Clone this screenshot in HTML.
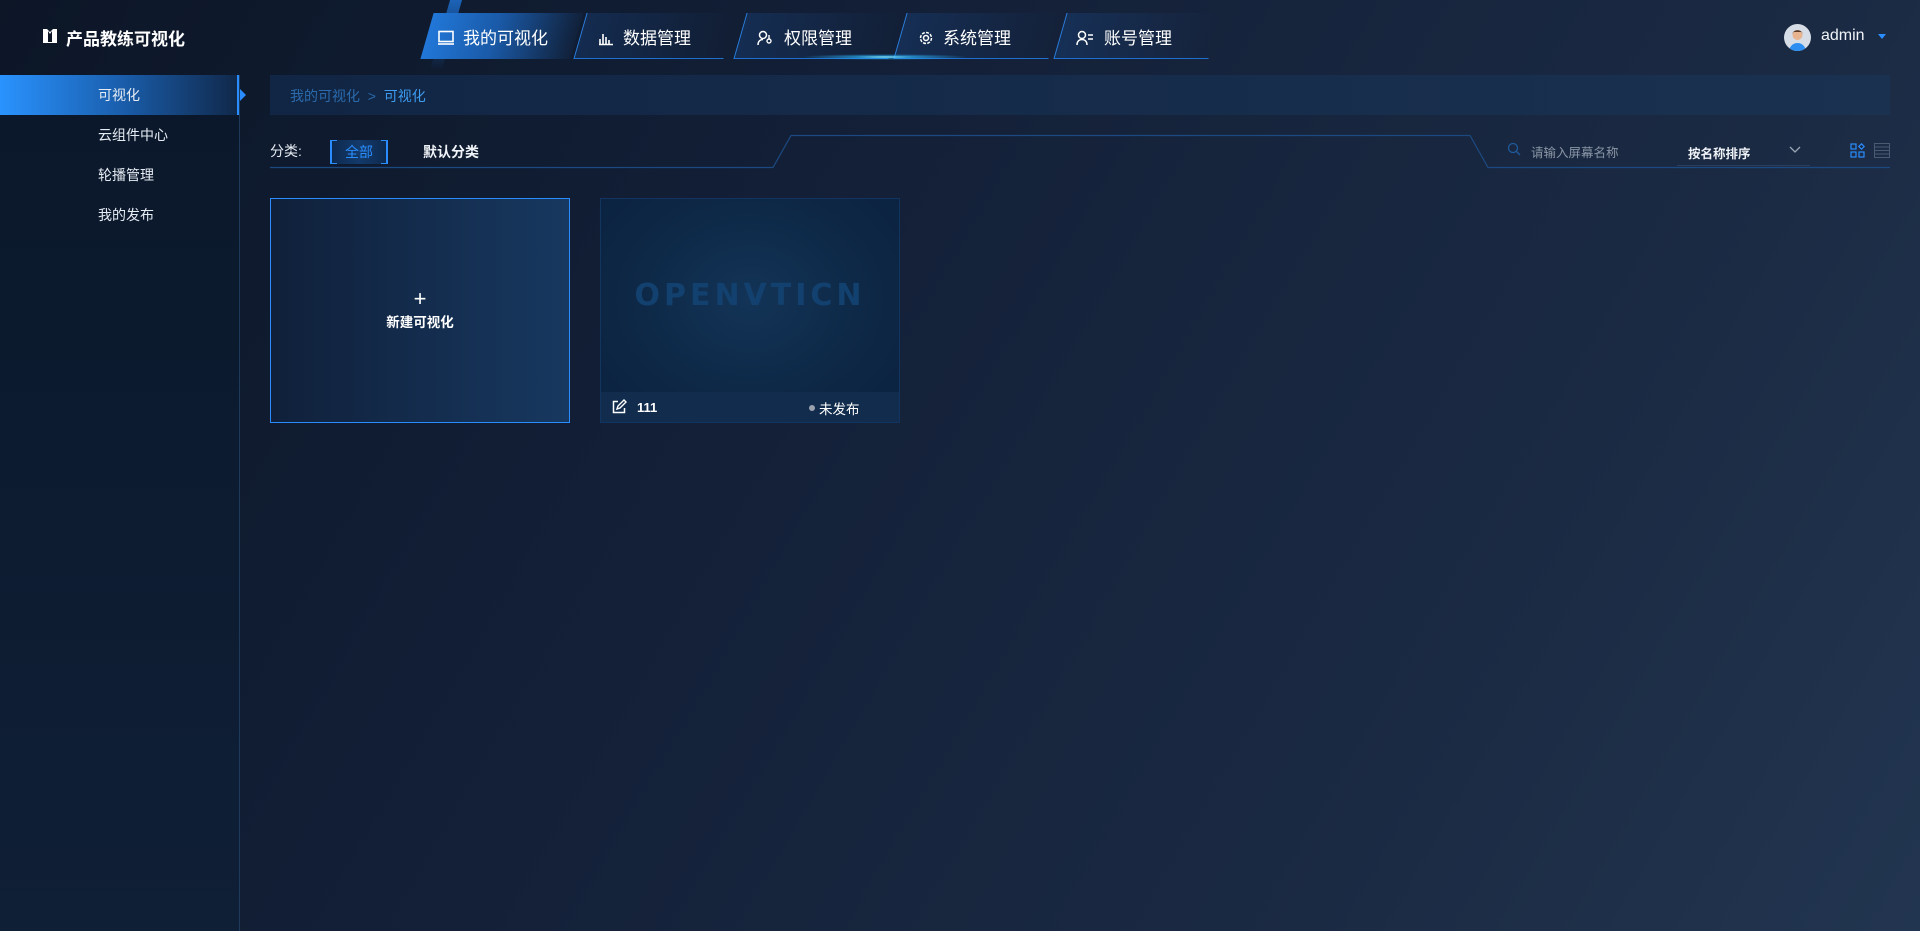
<!DOCTYPE html>
<html><head><meta charset="utf-8">
<style>
*{margin:0;padding:0;box-sizing:border-box}
body{width:1920px;height:931px;overflow:hidden;font-family:"Liberation Sans","Noto Sans CJK SC",sans-serif;color:#fff;
background:linear-gradient(120deg,#0c1627 0%,#132038 40%,#1b2a43 75%,#223550 100%);position:relative}
.abs{position:absolute}
.side{left:0;top:75px;width:240px;height:856px;background:linear-gradient(180deg,#0b182b,#0f1f36);border-right:1px solid #1d3a5c}
.item{position:absolute;left:0;width:239px;height:40px;line-height:40px;padding-left:98px;font-size:14px;color:#e6ecf3}
.item.act{background:linear-gradient(90deg,#2a93ff 0%,#1a5fae 50%,#10284a 100%);border-right:2px solid #2a8dff}
.tab{position:absolute;top:13px;height:46px;transform:skewX(-16deg);border:none;border-left:1px solid #2a7fe0;border-bottom:1px solid #1e6fd0;
background:linear-gradient(90deg,rgba(30,90,170,.25),rgba(20,40,70,0))}
.tab.act{background:linear-gradient(90deg,#2177d8 0%,#1a5aa8 45%,rgba(20,50,90,.2) 100%);border:none}
.tt{position:absolute;top:29px;font-size:17px;color:#fff;line-height:20px}
.ic{position:absolute;top:30px}
</style></head><body>
<div class="abs" style="left:40px;top:26px;width:20px;height:20px">
<svg width="20" height="20" viewBox="0 0 20 20"><path d="M3 3h4l3 3 3-3h4v14H3z" fill="#fff"/><path d="M8 5l2 3 2-3v11H8z" fill="#0c1627"/></svg></div>
<div class="abs" style="left:66px;top:25px;font-size:17px;font-weight:bold">产品教练可视化</div>

<div class="abs" style="left:440px;top:0;width:12px;height:70px;background:linear-gradient(180deg,#1c63b8,rgba(28,99,184,0));transform:skewX(-16deg)"></div>
<div class="tab act" style="left:427px;width:150px"></div>
<div class="tab" style="left:580px;width:150px"></div>
<div class="tab" style="left:740px;width:155px"></div>
<div class="tab" style="left:900px;width:155px"></div>
<div class="tab" style="left:1060px;width:155px"></div>
<div class="abs" style="left:800px;top:54px;width:170px;height:6px;background:radial-gradient(ellipse at center,rgba(150,240,255,1) 0%,rgba(40,170,240,.7) 25%,rgba(20,80,160,0) 70%)"></div>

<svg class="ic" style="left:437px" width="18" height="16" viewBox="0 0 18 16"><rect x="2" y="1.5" width="14" height="10" fill="none" stroke="#fff" stroke-width="1.6"/><path d="M1 14h16" stroke="#fff" stroke-width="1.6"/></svg>
<div class="tt" style="left:463px">我的可视化</div>
<svg class="ic" style="left:598px" width="16" height="16" viewBox="0 0 16 16"><path d="M2 14V9M5 14V4M8 14V7M11 14V10M1 14.5h14" stroke="#fff" stroke-width="1.6" fill="none"/></svg>
<div class="tt" style="left:623px">数据管理</div>
<svg class="ic" style="left:757px" width="18" height="16" viewBox="0 0 18 16"><circle cx="6" cy="5" r="3.5" fill="none" stroke="#fff" stroke-width="1.5"/><path d="M1 15c0-4 2.5-5.5 5-5.5" fill="none" stroke="#fff" stroke-width="1.5"/><circle cx="12" cy="11" r="2" fill="none" stroke="#fff" stroke-width="1.4"/><path d="M12 5v4" stroke="#fff" stroke-width="1.4"/></svg>
<div class="tt" style="left:784px">权限管理</div>
<svg class="ic" style="left:918px" width="16" height="16" viewBox="0 0 16 16"><circle cx="8" cy="8" r="2.5" fill="none" stroke="#fff" stroke-width="1.5"/><circle cx="8" cy="8" r="5.5" fill="none" stroke="#fff" stroke-width="1.5" stroke-dasharray="3 1.3"/></svg>
<div class="tt" style="left:943px">系统管理</div>
<svg class="ic" style="left:1076px" width="18" height="16" viewBox="0 0 18 16"><circle cx="6" cy="5" r="3.5" fill="none" stroke="#fff" stroke-width="1.5"/><path d="M1 15c0-4 2.5-5.5 5-5.5s5 1.5 5 5.5M12 5h5M12 9h5" fill="none" stroke="#fff" stroke-width="1.5"/></svg>
<div class="tt" style="left:1104px">账号管理</div>

<div class="abs" style="left:1784px;top:24px;width:27px;height:27px;border-radius:50%;background:#d6dde6;overflow:hidden">
<svg width="27" height="27" viewBox="0 0 27 27"><circle cx="13.5" cy="11" r="5" fill="#e8b38f"/><path d="M8.5 10c0-5 10-5 10 0l-1-2h-8z" fill="#5a3b2a"/><path d="M5 27c1-6 5-8 8.5-8s7.5 2 8.5 8z" fill="#2b8ef0"/></svg></div>
<div class="abs" style="left:1821px;top:27px;font-size:16px;color:#f0f4f8">admin</div>
<div class="abs" style="left:1878px;top:34px;width:0;height:0;border-left:4px solid transparent;border-right:4px solid transparent;border-top:5px solid #2a8dff"></div>

<div class="abs side">
<div class="item act" style="top:0">可视化</div>
<div class="item" style="top:40px">云组件中心</div>
<div class="item" style="top:80px">轮播管理</div>
<div class="item" style="top:120px">我的发布</div>
</div>
<div class="abs" style="left:240px;top:89px;width:0;height:0;border-top:6px solid transparent;border-bottom:6px solid transparent;border-left:6px solid #2a8dff"></div>

<div class="abs" style="left:270px;top:75px;width:1620px;height:40px;background:linear-gradient(90deg,#112644,#1a3150)"></div>
<div class="abs" style="left:290px;top:86px;font-size:14px;color:#2a6aad">我的可视化 &nbsp;&gt;&nbsp; <span style="color:#3d9bf0">可视化</span></div>

<div class="abs" style="left:270px;top:141px;font-size:14px;color:#e6ecf3">分类:</div>
<div class="abs" style="left:330px;top:140px;width:58px;height:24px;border:2px solid #2a8dff;border-top:none;border-bottom:none;background:linear-gradient(90deg,#0e2a50,#133a6a,#0e2a50)">
<div style="position:absolute;left:0;top:0;width:5px;height:100%;border-top:1px solid #2a8dff;border-bottom:1px solid #2a8dff"></div>
<div style="position:absolute;right:0;top:0;width:5px;height:100%;border-top:1px solid #2a8dff;border-bottom:1px solid #2a8dff"></div>
<div style="text-align:center;line-height:24px;font-size:14px;color:#2a8dff">全部</div></div>
<div class="abs" style="left:423px;top:142px;font-size:14px;font-weight:bold;color:#f0f4f8">默认分类</div>
<svg class="abs" style="left:270px;top:133px" width="1620" height="36"><path d="M0 34.5H503L521 2.5H1200L1218 34.5H1620" fill="none" stroke="#1c4a80" stroke-width="1.2"/></svg>
<svg class="abs" style="left:1507px;top:142px" width="14" height="15" viewBox="0 0 14 15"><circle cx="6" cy="6" r="4.5" fill="none" stroke="#1d5a9c" stroke-width="1.3"/><path d="M9.5 9.5l3.5 3.5" stroke="#1d5a9c" stroke-width="1.3"/></svg>
<div class="abs" style="left:1531px;top:142px;font-size:12.5px;color:#8a96a6">请输入屏幕名称</div>
<div class="abs" style="left:1688px;top:143px;font-size:12.5px;font-weight:bold;color:#eef2f6">按名称排序</div>
<svg class="abs" style="left:1789px;top:146px" width="12" height="8"><path d="M1 1l5 5 5-5" fill="none" stroke="#9aa6b5" stroke-width="1.3"/></svg>
<div class="abs" style="left:1677px;top:165px;width:133px;height:1px;background:#2a3f5c"></div>
<svg class="abs" style="left:1850px;top:143px" width="15" height="15" viewBox="0 0 15 15"><rect x="1" y="1" width="5" height="5" fill="none" stroke="#2a8dff" stroke-width="1.2"/><rect x="1" y="9" width="5" height="5" fill="none" stroke="#2a8dff" stroke-width="1.2"/><rect x="9" y="9" width="5" height="5" fill="none" stroke="#2a8dff" stroke-width="1.2"/><path d="M11.5 0.8l2.7 2.7-2.7 2.7-2.7-2.7z" fill="none" stroke="#2a8dff" stroke-width="1.2"/></svg>
<svg class="abs" style="left:1874px;top:143px" width="16" height="15" viewBox="0 0 16 15"><rect x="0.5" y="0.5" width="15" height="14" fill="none" stroke="#4a5a70"/><path d="M0.5 4h15M0.5 7.5h15M0.5 11h15" stroke="#4a5a70"/></svg>

<div class="abs" style="left:270px;top:198px;width:300px;height:225px;border:1px solid #2a8dff;background:linear-gradient(90deg,#10203a,#173860)">
<div style="position:absolute;left:0;width:100%;top:89px;text-align:center;font-size:22px;line-height:22px;font-weight:300">+</div>
<div style="position:absolute;left:0;width:100%;top:112px;text-align:center;font-size:13.5px;font-weight:bold">新建可视化</div></div>

<div class="abs" style="left:600px;top:198px;width:300px;height:225px;border:1px solid #123460;background:radial-gradient(ellipse at 50% 45%,#133457 0%,#0d2745 60%,#0a2240 100%)">
<div style="position:absolute;left:0;width:100%;top:79px;text-align:center;font-size:30px;font-weight:bold;letter-spacing:4px;color:#13416f;font-family:'DejaVu Sans',sans-serif">OPENVTICN</div>
<div style="position:absolute;left:0;bottom:0;width:100%;height:30px;background:#112c4d">
<svg style="position:absolute;left:10px;top:7px" width="16" height="16" viewBox="0 0 16 16"><path d="M7 2.5H2.5v11h11V9" fill="none" stroke="#fff" stroke-width="1.5"/><path d="M6 10l1-3 6-6 2 2-6 6z" fill="none" stroke="#fff" stroke-width="1.4"/></svg>
<div style="position:absolute;left:36px;top:8px;font-size:13px;font-weight:bold">111</div>
<div style="position:absolute;left:208px;top:13px;width:6px;height:6px;border-radius:50%;background:#9aa3ad"></div>
<div style="position:absolute;left:218px;top:6px;font-size:13.5px">未发布</div>
</div></div>
</body></html>
